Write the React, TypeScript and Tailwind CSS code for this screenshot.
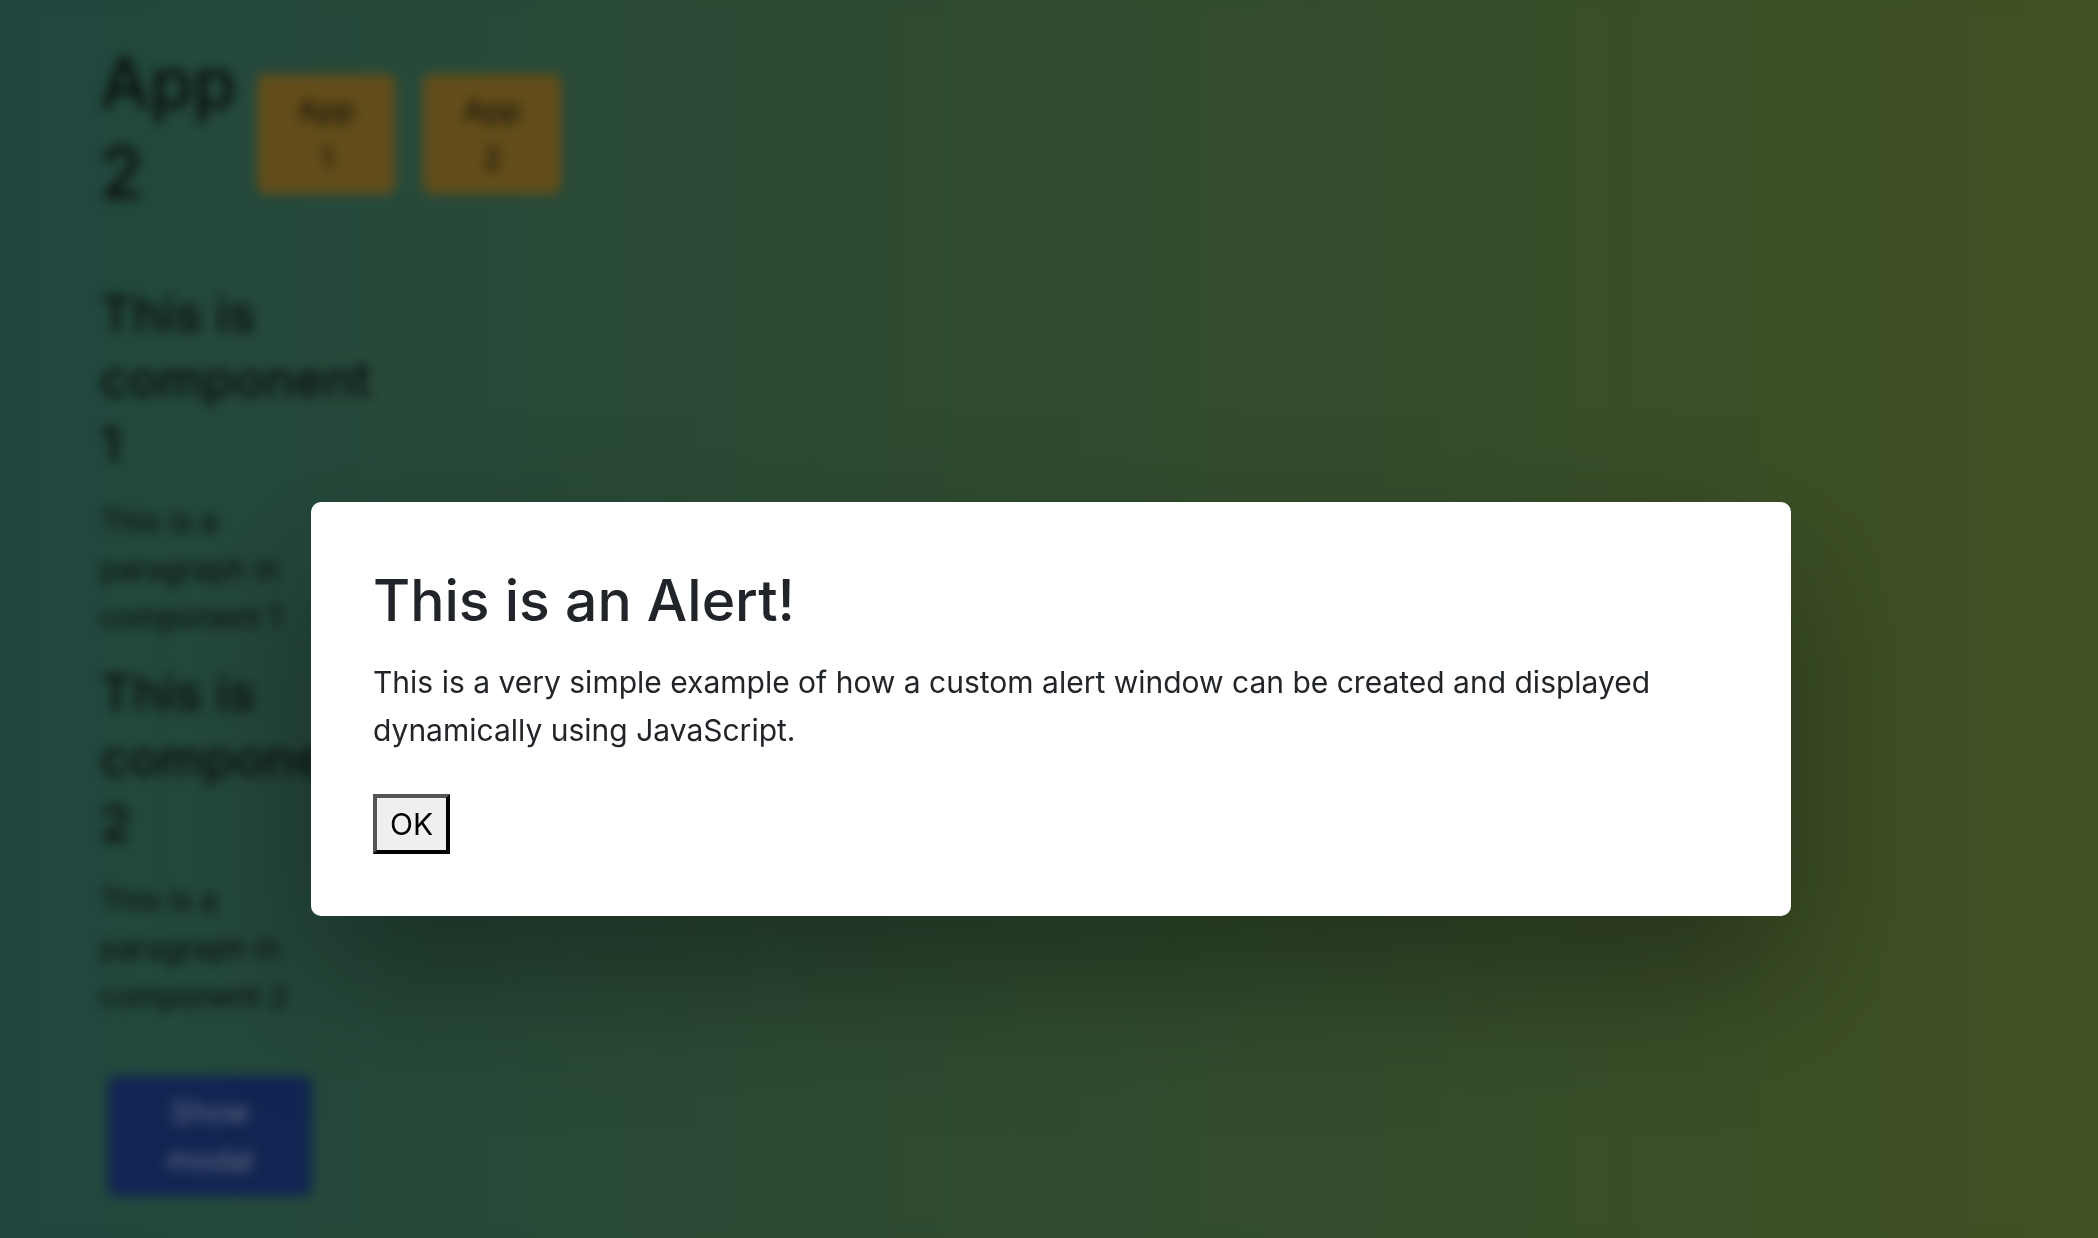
const apps = ["App 1", "App 2"];
const components = [1, 2];

export default function App() {
  return (
    <div className="relative min-h-screen bg-linear-to-r/srgb from-[#20473f] via-[#304c30] to-[#415022] font-[Inter,sans-serif] text-[30px] leading-[48px] text-[#0b0f0e]">
      <main className="min-h-screen px-[100px] pt-[38px]">
        <header className="flex items-center">
          <h1 className="w-[157px] text-[70px] font-medium leading-[90px]">App 2</h1>
          <nav className="flex gap-7 pt-3">
            {apps.map((name) => (
              <button key={name} className="w-[138px] rounded-lg bg-[#624d1a] px-8 py-3 text-[#120e06]">
                {name}
              </button>
            ))}
          </nav>
        </header>
        <div className="mt-16 w-[200px]">
          {components.map((n) => (
            <section key={n} className="mb-5">
              <h2 className="text-[50px] font-medium leading-[65px]">This is component {n}</h2>
              <p className="mt-5">This is a paragraph in component {n}</p>
            </section>
          ))}
        </div>
        <button className="mt-9 ml-2 w-[204px] rounded-lg bg-[#112552] px-12 py-3 text-[#626b80]">
          Show modal
        </button>
      </main>
      <div className="fixed inset-0 flex items-center justify-center pt-[180px] pl-1 backdrop-blur-[6px]">
        <div
          role="alertdialog"
          aria-modal="true"
          aria-labelledby="alert-title"
          aria-describedby="alert-text"
          className="w-[1480px] max-w-full rounded-[10px] bg-white p-[62px] text-[#212529] shadow-[0_64px_140px_rgba(0,0,0,0.35)]"
        >
          <h2 id="alert-title" className="text-[57px] font-medium leading-[74px]">
            This is an Alert!
          </h2>
          <p id="alert-text" className="mt-5">
            This is a very simple example of how a custom alert window can be created and displayed
            dynamically using JavaScript.
          </p>
          <button className="mt-10 block h-[60px] w-[77px] border-4 border-t-[#555] border-r-black border-b-black border-l-[#555] bg-[#efefef] text-black">
            OK
          </button>
        </div>
      </div>
    </div>
  );
}
